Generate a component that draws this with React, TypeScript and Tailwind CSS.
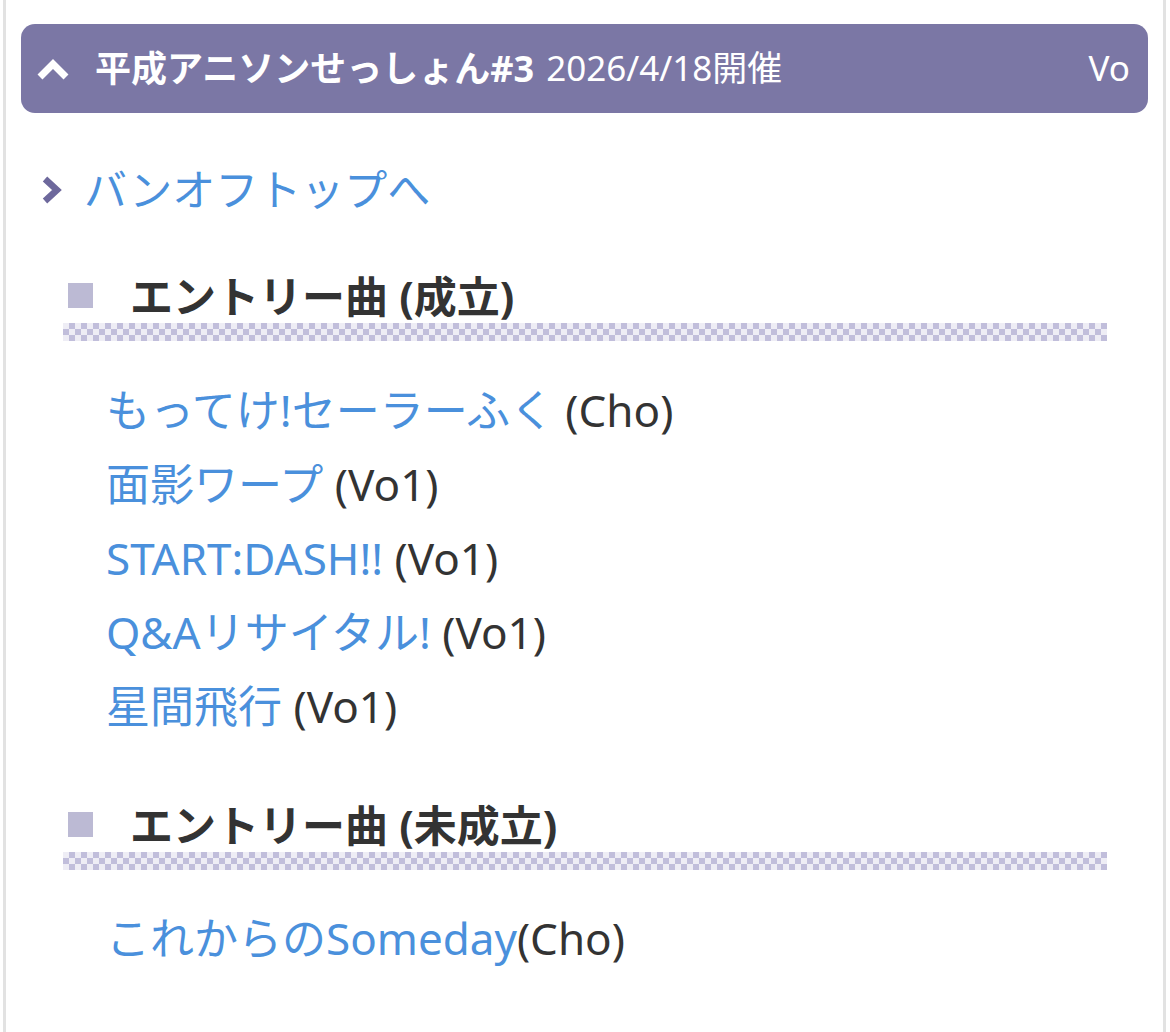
import React from 'react';

const font = { fontFamily: '"Noto Sans", "Noto Sans CJK JP", sans-serif' };

const entries = [
  { title: 'もってけ!セーラーふく', part: ' (Cho)' },
  { title: '面影ワープ', part: ' (Vo1)' },
  { title: 'START:DASH!!', part: ' (Vo1)' },
  { title: 'Q&Aリサイタル!', part: ' (Vo1)' },
  { title: '星間飛行', part: ' (Vo1)' },
];

const pending = [{ title: 'これからのSomeday', part: '(Cho)' }];

const SectionHeading: React.FC<{ label: string }> = ({ label }) => (
  <div className="ml-[42px] mr-[41px]">
    <div className="flex h-[50px] items-center pl-[5px]">
      <span className="mb-[4px] h-[25px] w-[25px] shrink-0 bg-[#bcbad4]" />
      <span className="ml-[37px] text-[43px] font-bold text-[#333]">{label}</span>
    </div>
    <div className="mt-[1px] h-[18px] bg-[conic-gradient(#c1bedb_25%,#eeedf5_0_50%,#c1bedb_0_75%,#eeedf5_0)] bg-[length:12px_12px]" />
  </div>
);

const SongRow: React.FC<{ title: string; part: string }> = ({ title, part }) => (
  <div className="flex h-[74px] items-center pl-[85px] text-[44px] whitespace-pre">
    <a className="text-[#4a90dc]">{title}</a>
    <span className="text-[#333]">{part}</span>
  </div>
);

export default function App() {
  return (
    <div className="min-h-[1032px] bg-white" style={font}>
      <div className="ml-[3px] min-h-[1032px] w-[1163px] border-x-[3px] border-[#e2e2e2] px-[15px] pt-[24px]">
        {/* Event header */}
        <div className="flex h-[89px] items-center rounded-[14px] bg-[#7b77a5] pl-[15px] pr-[18px] text-white">
          <svg width="34" height="24" viewBox="0 0 34 24" className="shrink-0">
            <path d="M4 20 L17 7 L30 20" fill="none" stroke="#fff" strokeWidth="7" strokeLinejoin="miter" />
          </svg>
          <span className="ml-[25px] text-[36px] font-bold">平成アニソンせっしょん#3</span>
          <span className="ml-[12px] text-[35px]">2026/4/18開催</span>
          <span className="ml-auto text-[35px]">Vo</span>
        </div>

        {/* Back link */}
        <div className="mt-[47px] flex h-[60px] items-center pl-[19px]">
          <svg width="24" height="30" viewBox="0 0 24 30" className="shrink-0">
            <path d="M5 4 L17 15 L5 26" fill="none" stroke="#6d689c" strokeWidth="6.5" />
          </svg>
          <a className="ml-[20px] text-[43px] text-[#4a90dc]">バンオフトップへ</a>
        </div>

        <div className="mt-[52px]">
          <SectionHeading label="エントリー曲 (成立)" />
        </div>
        <div className="mt-[32px]">
          {entries.map((e) => (
            <SongRow key={e.title} {...e} />
          ))}
        </div>

        <div className="mt-[58px]">
          <SectionHeading label="エントリー曲 (未成立)" />
        </div>
        <div className="mt-[31px]">
          {pending.map((e) => (
            <SongRow key={e.title} {...e} />
          ))}
        </div>
      </div>
    </div>
  );
}
